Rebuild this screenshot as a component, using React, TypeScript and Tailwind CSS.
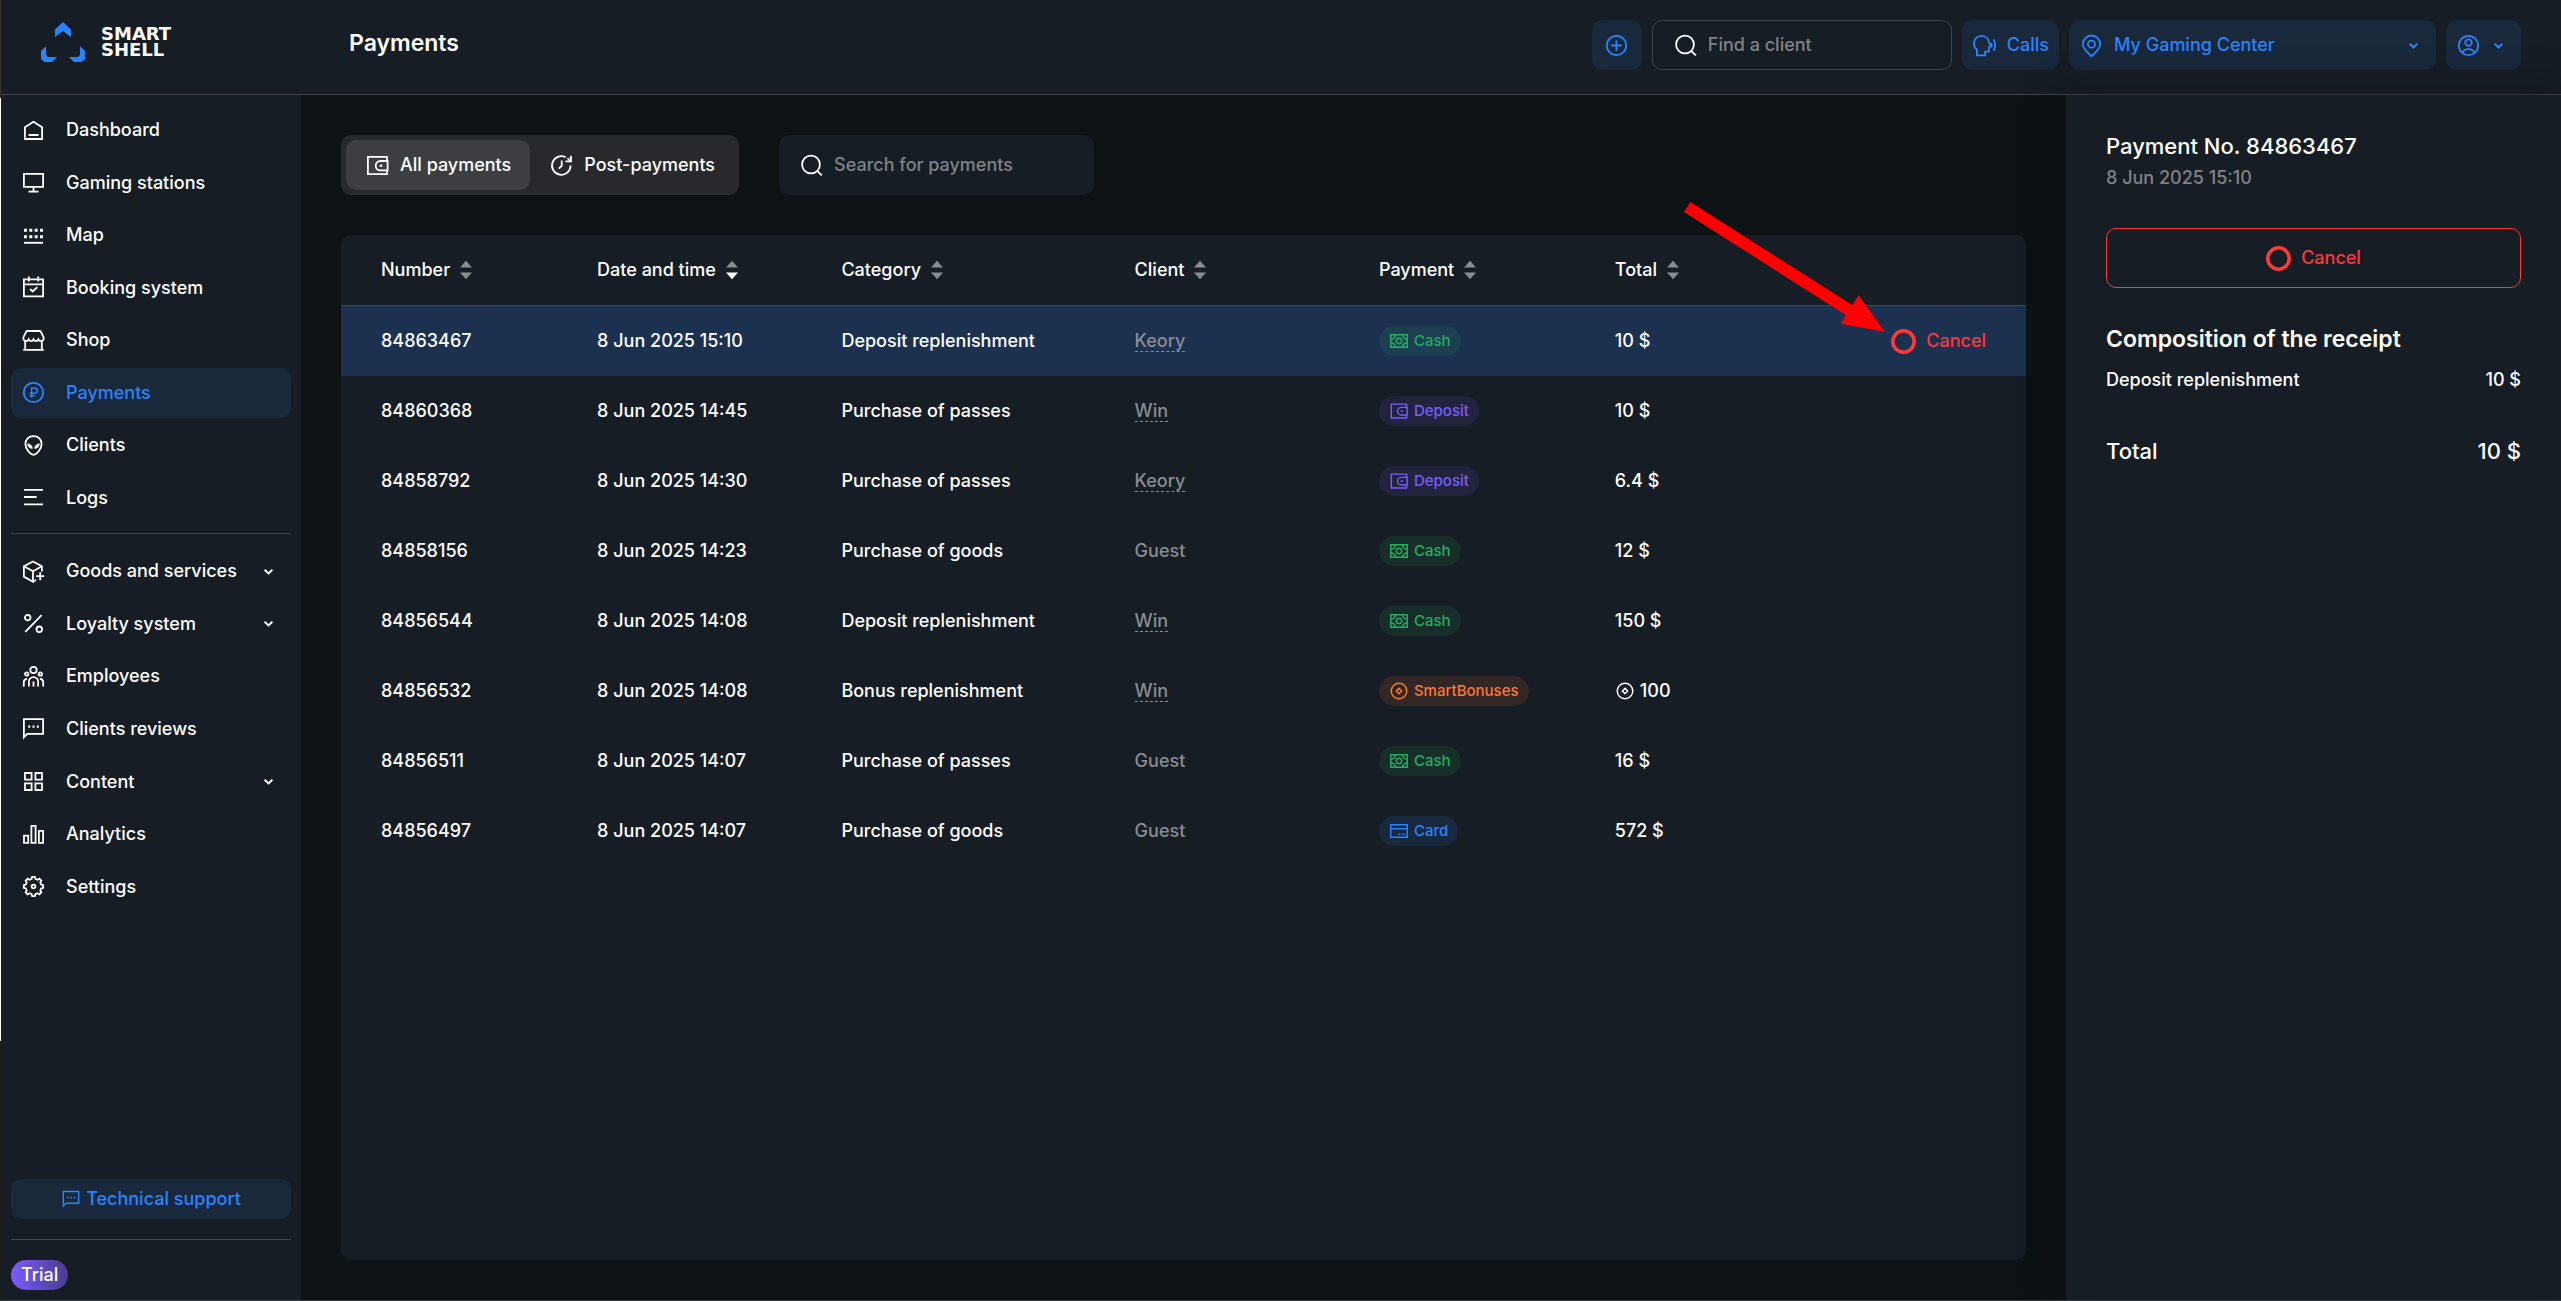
import type { ReactNode } from "react";
import { clsx } from "clsx";

type IconProps = { name: string; className?: string };

const gear = Array.from({ length: 8 }, (_, i) => {
  const at = (deg: number, r: number) => {
    const a = ((i * 45 + deg - 90) * Math.PI) / 180;
    return `${(12.5 + r * Math.cos(a)).toFixed(2)},${(12.5 + r * Math.sin(a)).toFixed(2)}`;
  };
  return [at(-8, 9.8), at(8, 9.8), at(14, 7.9), at(31, 7.9)].join(" ");
}).join(" ");

const icons: Record<string, ReactNode> = {
  dashboard: <path d="M3.9 9.2 12.5 3.8l8.6 5.4V21H3.9zM7.5 17h10" />,
  stations: <path d="M2.9 3.9h19.2v13H2.9zM12.5 17v4.6M7.5 21.7h10" />,
  map: (
    <g strokeWidth={3}>
      <path d="M3 7.2h19M3 13.7h19" strokeDasharray="3 2.33" />
      <path d="M3 19.8h19" strokeWidth={1.9} />
    </g>
  ),
  booking: <path d="M2.9 4.4h19.2v16.9H2.9zM2.9 9.4h19.2M7.8 1.5v5M17.2 1.5v5M9 14l2.7 2.5 4.6-4.3" />,
  shop: (
    <path d="M5.6 3h13.8l3.2 6.2c.5 2.2-.7 3.9-2.6 3.9-1.4 0-2.3-.7-2.7-1.7-.5 1-1.4 1.7-2.4 1.7s-1.9-.6-2.4-1.7c-.5 1.1-1.4 1.7-2.4 1.7s-1.9-.7-2.4-1.7c-.4 1-1.3 1.7-2.7 1.7-1.9 0-3.1-1.7-2.6-3.9zM4.2 13v8.7M20.8 13v8.7M2.2 21.9h20.6" />
  ),
  payments: (
    <>
      <circle cx="12.5" cy="12.5" r="9.7" />
      <path d="M10.6 17.8V7.9h3.1a2.7 2.7 0 0 1 0 5.4H8.6M8.6 15.7h5.2" strokeWidth={1.5} />
    </>
  ),
  clients: (
    <>
      <path d="M12.5 3.1C7.6 3.1 4.4 6.4 4.4 11c0 4.4 4.6 10.8 8.1 10.8s8.1-6.4 8.1-10.8c0-4.6-3.2-7.9-8.1-7.9z" />
      <path
        d="M6.6 10.8c2.6.2 4.6 1.7 4.8 4.6-2.8.2-4.6-1.5-4.8-4.6zM18.4 10.8c-2.6.2-4.6 1.7-4.8 4.6 2.8.2 4.6-1.5 4.8-4.6z"
        fill="currentColor"
        strokeWidth={0.6}
      />
    </>
  ),
  logs: <path d="M3 4.8h19M3 12h12.6M3 19.4h19" />,
  goods: (
    <path d="M12 12.3v10.4L2.9 17.6V7.3L12 2.4l8.9 4.9v5.2M2.9 7.3 12 12.3l8.9-5M12 22.7l3-1.7M15.2 17.2h8M19.2 13.2v8" />
  ),
  loyalty: (
    <>
      <circle cx="6.7" cy="6.6" r="2.8" />
      <circle cx="18.3" cy="18.3" r="2.8" />
      <path d="M20.6 4.2 4.3 20.9" />
    </>
  ),
  employees: (
    <>
      <circle cx="12.5" cy="6" r="3.2" />
      <circle cx="5.7" cy="10" r="1.7" />
      <circle cx="19.3" cy="10" r="1.7" />
      <path d="M7.9 22.5v-4.8a4.6 4.6 0 0 1 9.2 0v4.8M12.5 17.5v5M2.8 22.5v-4.3c0-2 1.3-3.3 3.3-3.4M22.2 22.5v-4.3c0-2-1.3-3.3-3.3-3.4" />
    </>
  ),
  reviews: (
    <>
      <path d="M2.9 3.2h19.2v14.6H6.2L2.9 21.2z" />
      <path d="M7.2 10.7h2M11.5 10.7h2M15.8 10.7h2" strokeWidth={2.2} />
    </>
  ),
  content: (
    <path d="M4 4h6.6v6.6H4zM14.4 4H21v6.6h-6.6zM4 14.4h6.6V21H4zM14.4 14.4H21V21h-6.6z" />
  ),
  analytics: <path d="M3 13.7h4.2v7.1H3zM10.4 3.8h4.2v17h-4.2zM17.9 8.9h4.2v11.9h-4.2z" />,
  settings: (
    <>
      <polygon points={gear} />
      <circle cx="12.5" cy="12.5" r="1.9" />
    </>
  ),
  chevron: <path d="m8.6 10.8 3.9 3.6 3.9-3.6" strokeWidth={2} />,
  plus: (
    <>
      <circle cx="12.5" cy="12.5" r="9.7" />
      <path d="M12.5 7.3v10.4M7.3 12.5h10.4" />
    </>
  ),
  search: (
    <>
      <circle cx="12" cy="11.5" r="8.9" />
      <path d="m18.2 17.8 4.6 4.6" />
    </>
  ),
  calls: (
    <path d="M4.9 22.3v-5.4C3 15.3 2 13 2 10.4 2 6 5.4 2.8 9.6 2.8c4 0 7 2.7 7.4 6.6l1.9 3.8-2 1.1v4.3h-3.8v3.7zM19.1 9.8c.8 1.5.8 3 0 4.4M21.5 6.4c2 3.5 2 7.9 0 11.4" />
  ),
  pin: (
    <>
      <path d="M12.5 23.2c-4.6-3.9-8.7-7.7-8.7-12a8.7 8.7 0 0 1 17.4 0c0 4.3-4.1 8.1-8.7 12z" />
      <circle cx="12.5" cy="11.2" r="3.5" />
    </>
  ),
  account: (
    <>
      <circle cx="12.5" cy="12.5" r="9.7" />
      <circle cx="12.5" cy="9.6" r="3.3" />
      <path d="M6.4 19.8c1.2-2.5 3.4-3.6 6.1-3.6s4.9 1.1 6.1 3.6" />
    </>
  ),
  wallet: (
    <>
      <path d="M22 8V3.9H2.9v17.3H22v-3.7" />
      <path d="M22.6 8h-7.2a4.7 4.7 0 0 0 0 9.4h7.2z" />
      <path d="M14.7 12.7h2.6" strokeWidth={2.2} />
    </>
  ),
  post: (
    <>
      <path d="M16.7 4.3a9.3 9.3 0 1 0 4.9 8.2M22 2.8v5.6h-5.6M21.8 8.2l-3.2-3" />
      <path d="M12.7 7.5v5.4l-3 2.8" />
    </>
  ),
  cash: (
    <>
      <path d="M2.2 4.6h20.6v15.8H2.2z" />
      <circle cx="12.5" cy="12.5" r="3.4" />
      <path d="M8.3 4.8c-.6 3-2.8 5.1-6 5.6M16.7 4.8c.6 3 2.8 5.1 6 5.6M8.3 20.2c-.6-3-2.8-5.1-6-5.6M16.7 20.2c.6-3 2.8-5.1 6-5.6" />
    </>
  ),
  card: <path d="M2.2 4.6h20.6v15.8H2.2zM2.2 9.7h20.6M11 16.4h3.4M16.6 16.4H20" />,
  bonus: (
    <>
      <circle cx="12.5" cy="12.5" r="9.7" />
      <path d="m12.5 9.2 3.3 3.3-3.3 3.3-3.3-3.3z" />
    </>
  ),
};

function Icon({ name, className = "size-[25px]" }: IconProps) {
  return (
    <svg
      viewBox="0 0 25 25"
      fill="none"
      stroke="currentColor"
      strokeWidth={1.8}
      aria-hidden="true"
      className={clsx("shrink-0", className)}
    >
      {icons[name]}
    </svg>
  );
}

function Ring() {
  return (
    <svg viewBox="0 0 25 25" aria-hidden="true" className="size-[25px] shrink-0">
      <circle cx="12.5" cy="12.5" r="10.7" fill="none" stroke="currentColor" strokeWidth={3.6} />
    </svg>
  );
}

const mainNav = [
  { label: "Dashboard", icon: "dashboard" },
  { label: "Gaming stations", icon: "stations" },
  { label: "Map", icon: "map" },
  { label: "Booking system", icon: "booking" },
  { label: "Shop", icon: "shop" },
  { label: "Payments", icon: "payments", active: true },
  { label: "Clients", icon: "clients" },
  { label: "Logs", icon: "logs" },
];

const manageNav = [
  { label: "Goods and services", icon: "goods", more: true },
  { label: "Loyalty system", icon: "loyalty", more: true },
  { label: "Employees", icon: "employees" },
  { label: "Clients reviews", icon: "reviews" },
  { label: "Content", icon: "content", more: true },
  { label: "Analytics", icon: "analytics" },
  { label: "Settings", icon: "settings" },
];

const columns = [
  { label: "Number", width: "w-[15.2%] pl-10" },
  { label: "Date and time", width: "w-[14.5%]", sorted: true },
  { label: "Category", width: "w-[17.4%]" },
  { label: "Client", width: "w-[14.5%]" },
  { label: "Payment", width: "w-[14%]" },
  { label: "Total", width: "w-[10%]" },
];

const badges: Record<string, { icon: string; className: string }> = {
  Cash: { icon: "cash", className: "bg-[#27ae60]/12 text-[#27ae60]" },
  Deposit: { icon: "wallet", className: "bg-[#7a5cff]/12 text-[#7a5cff]" },
  SmartBonuses: { icon: "bonus", className: "bg-[#ff7733]/12 text-[#ff7733]" },
  Card: { icon: "card", className: "bg-[#2984ff]/12 text-[#2984ff]" },
};

const payments = [
  { id: "84863467", date: "8 Jun 2025 15:10", category: "Deposit replenishment", client: "Keory", method: "Cash", total: "10 $" },
  { id: "84860368", date: "8 Jun 2025 14:45", category: "Purchase of passes", client: "Win", method: "Deposit", total: "10 $" },
  { id: "84858792", date: "8 Jun 2025 14:30", category: "Purchase of passes", client: "Keory", method: "Deposit", total: "6.4 $" },
  { id: "84858156", date: "8 Jun 2025 14:23", category: "Purchase of goods", client: "Guest", method: "Cash", total: "12 $" },
  { id: "84856544", date: "8 Jun 2025 14:08", category: "Deposit replenishment", client: "Win", method: "Cash", total: "150 $" },
  { id: "84856532", date: "8 Jun 2025 14:08", category: "Bonus replenishment", client: "Win", method: "SmartBonuses", total: "100" },
  { id: "84856511", date: "8 Jun 2025 14:07", category: "Purchase of passes", client: "Guest", method: "Cash", total: "16 $" },
  { id: "84856497", date: "8 Jun 2025 14:07", category: "Purchase of goods", client: "Guest", method: "Card", total: "572 $" },
];

type NavItem = { label: string; icon: string; active?: boolean; more?: boolean };

function NavList({ items, className }: { items: NavItem[]; className: string }) {
  return (
    <ul className={clsx("flex flex-col justify-between", className)}>
      {items.map((item) => (
        <li key={item.label}>
          <a
            href="#"
            className={clsx(
              "flex h-[50px] items-center rounded-[10px] px-[10px]",
              item.active && "bg-[#1a283b] text-[#2984ff]"
            )}
          >
            <Icon name={item.icon} />
            <span className="ml-5 flex-1">{item.label}</span>
            {item.more && <Icon name="chevron" />}
          </a>
        </li>
      ))}
    </ul>
  );
}

function Header() {
  return (
    <header className="flex h-[95px] items-center border-b border-[#43454a] pb-[4px]">
      <a href="#" className="flex w-[300px] items-center gap-4 pb-1.5 pl-10" aria-label="Smart Shell">
        <svg viewBox="0 0 44 40" fill="#2984ff" className="h-10 w-11 shrink-0" aria-hidden="true">
          <path d="M22 0 30 7.5V15L22 9l-8 6V7.5zM5 24v9l2 2h9l-5 5H3.5L0 37v-8zM39 24v9l-2 2h-9l5 5h7.5L44 37v-8z" />
        </svg>
        <span className="font-['DejaVu_Sans',sans-serif] text-lg leading-4 font-bold">
          SMART
          <br />
          SHELL
        </span>
      </a>
      <h1 className="flex-1 pb-0.5 pl-12 text-[23px] font-semibold">Payments</h1>
      <div className="flex items-center gap-[10px] pr-10">
        <button aria-label="Add" className="flex size-[50px] items-center justify-center rounded-[10px] bg-[#1a283b] text-[#2984ff]">
          <Icon name="plus" />
        </button>
        <label className="flex h-[50px] w-[300px] items-center gap-[10px] rounded-[10px] border border-[#43454a] px-5">
          <Icon name="search" />
          <input
            aria-label="Find a client"
            placeholder="Find a client"
            className="min-w-0 flex-1 bg-transparent outline-none placeholder:text-[#808386]"
          />
        </label>
        <button className="flex h-[50px] items-center gap-[10px] rounded-[10px] bg-[#1a283b] px-[10px] text-[#2984ff]">
          <Icon name="calls" />
          Calls
        </button>
        <div className="relative flex w-[367px] items-center rounded-[10px] bg-[#1a283b] text-[#2984ff]">
          <Icon name="pin" className="pointer-events-none absolute left-[10px] size-[25px]" />
          <select aria-label="Gaming center" className="h-[50px] w-full appearance-none bg-transparent pl-[45px] outline-none">
            <option>My Gaming Center</option>
          </select>
          <Icon name="chevron" className="pointer-events-none absolute right-[10px] size-[25px]" />
        </div>
        <button aria-label="Account" className="flex h-[50px] items-center gap-[5px] rounded-[10px] bg-[#1a283b] px-[10px] text-[#2984ff]">
          <Icon name="account" />
          <Icon name="chevron" />
        </button>
      </div>
    </header>
  );
}

function Sidebar() {
  return (
    <aside className="flex w-[300px] shrink-0 flex-col bg-[#161d24] p-[10px]">
      <nav>
        <NavList items={mainNav} className="min-h-[418px]" />
        <hr className="mt-[10px] mb-3 border-[#43454a]" />
        <NavList items={manageNav} className="min-h-[366px]" />
      </nav>
      <button className="mt-auto flex h-10 items-center justify-center gap-[5px] rounded-[10px] bg-[#1a283b] text-[#2984ff]">
        <Icon name="reviews" className="size-5" />
        Technical support
      </button>
      <hr className="my-5 border-[#43454a]" />
      <span className="flex h-[30px] items-center self-start rounded-full bg-linear-to-r from-[#7a5cff] to-[#4a3d8c] px-[10px]">
        Trial
      </span>
    </aside>
  );
}

function SortArrows({ sorted }: { sorted?: boolean }) {
  return (
    <svg viewBox="0 0 12 20" className="h-5 w-3 text-[#8a8d90]" fill="currentColor" aria-hidden="true">
      <path d="M6 .8 12 7.5H0z" />
      <path d="M6 19.2 0 12.5h12z" className={clsx(sorted && "text-white")} />
    </svg>
  );
}

function PaymentsTable() {
  return (
    <table className="w-full table-fixed border-separate border-spacing-0 text-left">
      <thead>
        <tr>
          {columns.map((col) => (
            <th key={col.label} className={clsx("h-[71px] border-b border-[#43454a] font-medium", col.width)}>
              <button className="flex items-center gap-[10px]">
                {col.label}
                <SortArrows sorted={col.sorted} />
              </button>
            </th>
          ))}
          <th className="border-b border-[#43454a]" />
        </tr>
      </thead>
      <tbody>
        {payments.map((row, i) => (
          <tr key={row.id} className={clsx(i === 0 && "bg-[#1c3050]")}>
            <td className="h-[70px] pl-10">{row.id}</td>
            <td>{row.date}</td>
            <td>{row.category}</td>
            <td className="text-[#8a8d90]">
              {row.client === "Guest" ? (
                row.client
              ) : (
                <a href="#" className="border-b border-dashed border-[#8a8d90]">
                  {row.client}
                </a>
              )}
            </td>
            <td>
              <span className={clsx("inline-flex h-[30px] items-center gap-[5px] rounded-full px-[10px] align-middle text-[15px]", badges[row.method].className)}>
                <Icon name={badges[row.method].icon} className="size-5" />
                {row.method}
              </span>
            </td>
            <td>
              <span className="flex items-center gap-[5px]">
                {row.method === "SmartBonuses" && <Icon name="bonus" className="size-5" />}
                {row.total}
              </span>
            </td>
            <td className="pr-10">
              {i === 0 && (
                <button className="ml-auto flex items-center gap-[10px] text-[#ff3838]">
                  <Ring />
                  Cancel
                </button>
              )}
            </td>
          </tr>
        ))}
      </tbody>
    </table>
  );
}

function PaymentDetails() {
  return (
    <aside className="z-10 w-[495px] shrink-0 bg-[#161d24] px-10 pt-9 shadow-[0_0_40px_rgba(20,12,24,0.4)]">
      <h2 className="text-[22px] leading-[30px] font-medium">Payment No. 84863467</h2>
      <p className="mt-[5px] leading-6 text-[#808386]">8 Jun 2025 15:10</p>
      <button className="mt-[38px] flex h-[60px] w-full items-center justify-center gap-[10px] rounded-[10px] border border-[#ff3838] text-[#ff3838]">
        <Ring />
        Cancel
      </button>
      <h3 className="mt-9 text-[23px] leading-[30px] font-semibold">Composition of the receipt</h3>
      <div className="mt-[14px] flex justify-between leading-6">
        <span>Deposit replenishment</span>
        <span>10 $</span>
      </div>
      <div className="mt-11 flex justify-between text-[22px] leading-[30px]">
        <span>Total</span>
        <span>10 $</span>
      </div>
    </aside>
  );
}

export default function App() {
  return (
    <div className="flex min-h-screen bg-[#161d24] font-[Inter,sans-serif] text-lg font-medium text-white">
      <div className="w-px bg-[linear-gradient(#393533_7.5%,#fff_7.5%,#fff_80%,#1c1c1c_80%)]" />
      <div className="flex min-w-0 flex-1 flex-col border-b border-[#3a3c40]">
        <Header />
        <div className="flex flex-1">
          <Sidebar />
          <main className="flex min-w-0 flex-1 flex-col gap-10 bg-[#0d1215] p-10">
            <div className="flex gap-10">
              <div className="flex h-[60px] rounded-[10px] bg-[#27292d] p-[5px]">
                <button className="flex items-center gap-[10px] rounded-[10px] bg-[#3c3e42] px-[19px]">
                  <Icon name="wallet" />
                  All payments
                </button>
                <button className="flex items-center gap-[10px] rounded-[10px] px-[19px]">
                  <Icon name="post" />
                  Post-payments
                </button>
              </div>
              <label className="flex h-[60px] w-[315px] items-center gap-[10px] rounded-[10px] bg-[#161d24] px-5">
                <Icon name="search" />
                <input
                  aria-label="Search for payments"
                  placeholder="Search for payments"
                  className="min-w-0 flex-1 bg-transparent outline-none placeholder:text-[#808386]"
                />
              </label>
            </div>
            <section className="relative flex-1 rounded-[10px] bg-[#161d24]">
              <PaymentsTable />
              <svg
                viewBox="0 0 201 130"
                fill="#ff0000"
                aria-hidden="true"
                className="pointer-events-none absolute -top-[33px] right-[141px] h-[130px] w-[201px]"
              >
                <path d="M6.3 0 168.3 103l6.4-9.7L201 130l-44.3-8.3 5.3-8.4L0 10z" />
              </svg>
            </section>
          </main>
          <PaymentDetails />
        </div>
      </div>
    </div>
  );
}
